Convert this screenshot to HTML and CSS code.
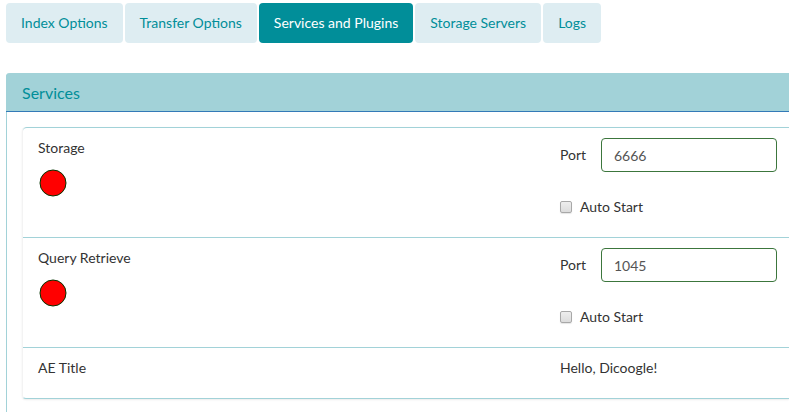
FILE: index.html
```
<!DOCTYPE html>
<html lang="en">
<head>
<meta charset="utf-8">
<meta name="viewport" content="width=device-width, initial-scale=1">
<title>Services and Plugins</title>
<link rel="stylesheet" href="styles.css">
</head>
<body>
<nav class="tabs">
  <a class="tab" href="#index">Index Options</a>
  <a class="tab" href="#transfer">Transfer Options</a>
  <a class="tab active" href="#services">Services and Plugins</a>
  <a class="tab" href="#storage">Storage Servers</a>
  <a class="tab" href="#logs">Logs</a>
</nav>
<section class="panel">
  <h1 class="panel-heading">Services</h1>
  <ul class="services">
    <li class="service">
      <div>
        <div>Storage</div>
        <svg class="status" viewBox="0 0 30 30" aria-hidden="true"><circle cx="15" cy="15" r="13" /></svg>
      </div>
      <div class="settings">
        <div class="port">
          <label for="storage-port">Port</label>
          <input class="port-input" id="storage-port" type="text" value="6666">
        </div>
        <label class="auto"><input class="check" type="checkbox">Auto Start</label>
      </div>
    </li>
    <li class="service">
      <div>
        <div>Query Retrieve</div>
        <svg class="status" viewBox="0 0 30 30" aria-hidden="true"><circle cx="15" cy="15" r="13" /></svg>
      </div>
      <div class="settings">
        <div class="port">
          <label for="query-port">Port</label>
          <input class="port-input" id="query-port" type="text" value="1045">
        </div>
        <label class="auto"><input class="check" type="checkbox">Auto Start</label>
      </div>
    </li>
    <li class="service">
      <div>AE Title</div>
      <div>Hello, Dicoogle!</div>
    </li>
  </ul>
</section>
</body>
</html>
```
FILE: styles.css
```
* {
  box-sizing: border-box;
}

html {
  min-height: 100%;
  display: flex;
}

body {
  flex: 1;
  display: flex;
  flex-direction: column;
  margin: 0;
  padding: 3px 0 0 6px;
  background: #fff;
  color: #333;
  font: 14px/20px Lato, "Liberation Sans", sans-serif;
}

.tabs {
  display: flex;
  gap: 2px;
  margin-bottom: 30px;
}

.tab {
  padding: 10px 15px;
  border-radius: 4px;
  background: #deedf2;
  color: #018e99;
  text-decoration: none;
  white-space: nowrap;
}

.tab.active {
  background: #018e99;
  color: #fff;
}

.panel {
  flex: 1;
  border-left: 1px solid #a2d2d8;
  border-top-left-radius: 4px;
}

.panel-heading {
  margin: 0 0 0 -1px;
  padding: 10px 16px 8px;
  border-bottom: 1px solid #337ab7;
  border-top-left-radius: 4px;
  background: #a2d2d8;
  color: #018e99;
  font-size: 16px;
  font-weight: 400;
  line-height: 20px;
}

.services {
  list-style: none;
  margin: 15px 0 13px 15px;
  padding: 0;
  border-left: 1px solid #f3f3f3;
  border-bottom: 1px solid #a2d2d8;
  border-radius: 4px 0 0 4px;
  box-shadow: 0 1px 2px rgba(0, 0, 0, 0.08);
}

.service {
  display: grid;
  grid-template-columns: 1fr 217px;
  padding: 10px 12px 20px 15px;
  border-top: 1px solid #a2d2d8;
}

.service:first-child {
  border-top-left-radius: 4px;
}

.status {
  display: block;
  width: 30px;
  height: 30px;
  margin-top: 10px;
  fill: #f00;
  stroke: #003500;
}

.settings {
  display: flex;
  flex-direction: column;
  gap: 25px;
}

.port {
  display: flex;
  align-items: center;
  justify-content: space-between;
}

.port-input {
  width: 176px;
  height: 34px;
  padding: 6px 12px;
  border: 1px solid #3c763d;
  border-radius: 4px;
  background: #fff;
  color: #555;
  font: inherit;
}

.auto {
  display: flex;
  align-items: center;
  gap: 8px;
}

.check {
  appearance: none;
  width: 12px;
  height: 12px;
  margin: 0;
  border: 1px solid #a8a8a8;
  border-radius: 2px;
  background: linear-gradient(#eee, #dcdcdc);
  box-shadow: 0 1px 1px rgba(0, 0, 0, 0.1);
}

.check:checked {
  background: #018e99;
}
```
